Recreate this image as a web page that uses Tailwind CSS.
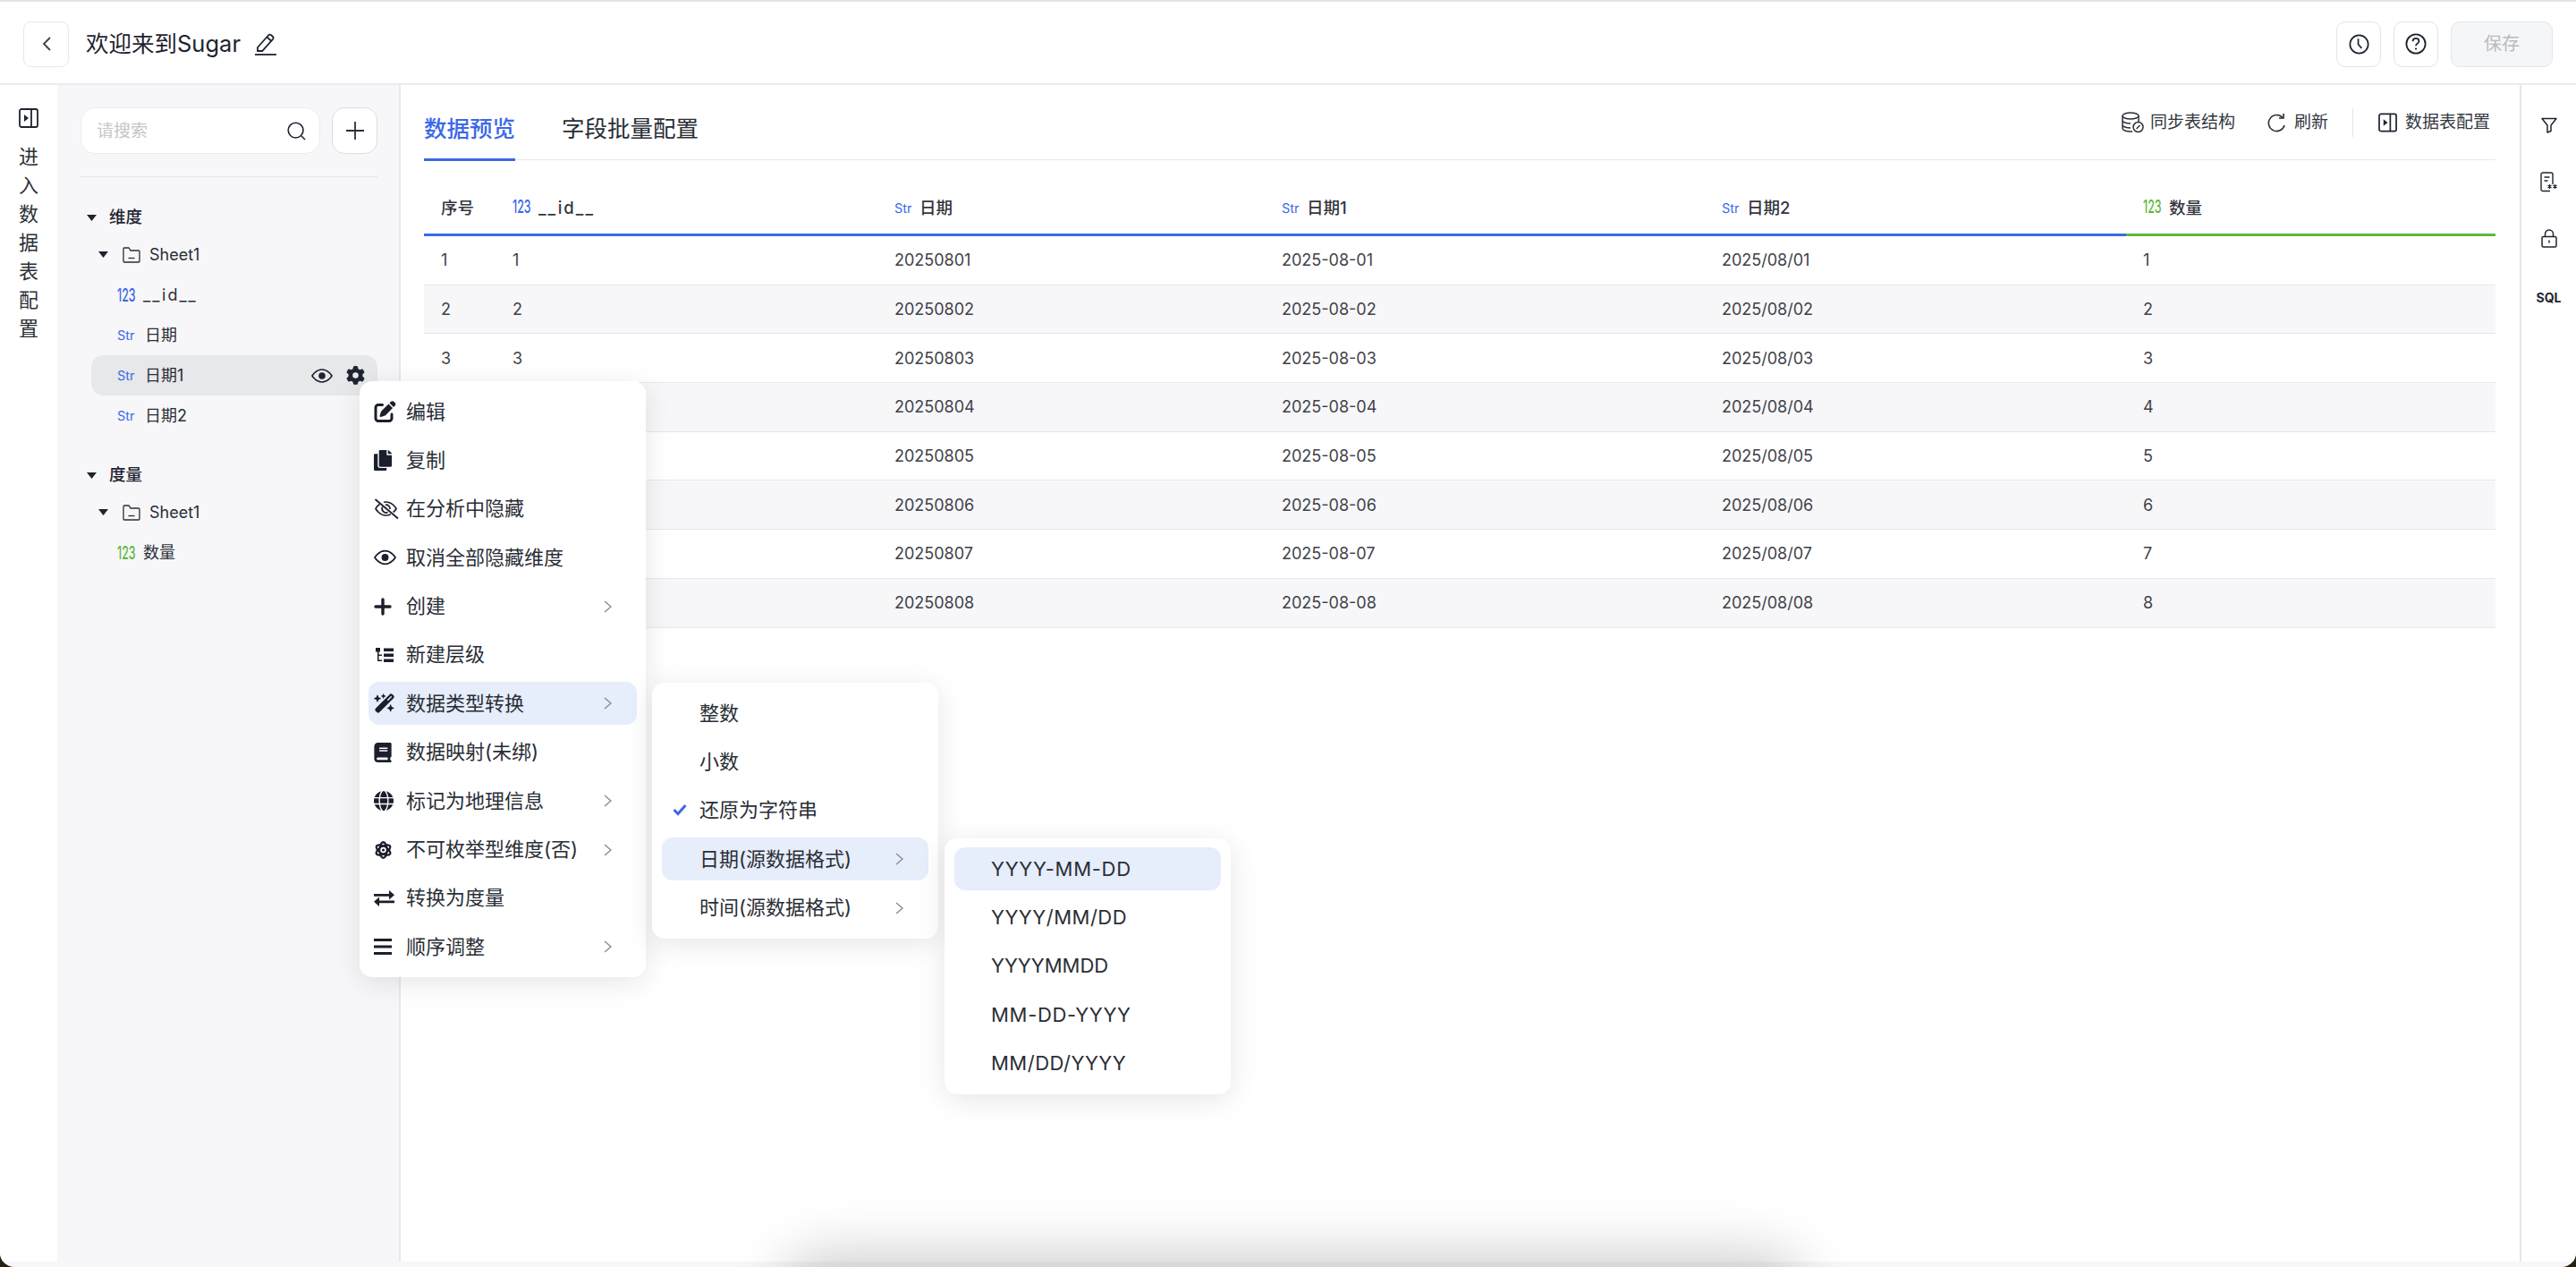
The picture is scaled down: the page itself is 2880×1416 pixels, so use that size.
<!DOCTYPE html>
<html lang="zh-CN">
<head>
<meta charset="utf-8">
<title>Sugar</title>
<script src="https://cdn.jsdelivr.net/npm/@tailwindcss/browser@4"></script>
</head>
<body class="m-0">
<div class="relative w-[2880px] h-[1416px] overflow-hidden bg-[#2b1d12] font-['Inter','Noto_Sans_CJK_SC',sans-serif] text-[#1f2430]">
  <div class="h-full rounded-b-[16px] overflow-hidden bg-[#f7f7f9] flex flex-col pb-[6px]">
    <!-- header -->
    <header class="h-[95px] shrink-0 bg-white border-t-2 border-t-[#e3e3e3] border-b-2 border-b-[#ececec] flex items-center pl-[26px] pr-[26px] pt-[3px]">
      <button class="w-[51px] h-[51px] rounded-[8px] border border-[#e8e8e8] flex items-center justify-center">
        <svg class="w-[12px] h-[18px]" viewBox="0 0 12 18" fill="none" stroke="#3c4048" stroke-width="1.8"><path d="M10 2 3 9l7 7"/></svg>
      </button>
      <h1 class="ml-[19px] text-[25.5px] font-normal leading-none">欢迎来到Sugar</h1>
      <svg class="ml-[16px] w-[24px] h-[26px]" viewBox="0 0 24 26" fill="none" stroke="#1f2430" stroke-width="1.8"><path d="M3 17 15 3.5c1-1 2.2-1 3.2-.2l1.6 1.4c1 .9 1 2.2.2 3.2L8.2 21H3z"/><path d="m13.5 5.5 5 4.5"/><path d="M0 25h24"/></svg>
      <div class="ml-auto flex items-center gap-[14px]">
        <button class="w-[50px] h-[51px] rounded-[10px] border border-[#e4e4e4] flex items-center justify-center">
          <svg class="w-[23px] h-[23px]" viewBox="0 0 24 24" fill="none" stroke="#1f2430" stroke-width="1.8"><circle cx="12" cy="12" r="10.6"/><path d="M11 5.5V12l4 4.5"/></svg>
        </button>
        <button class="w-[50px] h-[51px] rounded-[10px] border border-[#e4e4e4] flex items-center justify-center">
          <svg class="w-[24px] h-[24px]" viewBox="0 0 24 24" fill="none" stroke="#1f2430" stroke-width="1.8"><circle cx="12" cy="12" r="10.6"/><path d="M8.6 9.3c0-2 1.5-3.4 3.4-3.4s3.4 1.3 3.4 3.1c0 2.6-3.4 2.7-3.4 5.2"/><circle cx="12" cy="17.6" r="1.1" fill="#1f2430" stroke="none"/></svg>
        </button>
        <button class="w-[114px] h-[51px] rounded-[10px] border border-[#e4e6ea] bg-[#f5f6f8] text-[#b9bbbf] text-[20px]">保存</button>
      </div>
    </header>
    <div class="flex-1 flex min-h-0">
      <!-- narrow rail -->
      <aside class="w-[64px] shrink-0 bg-white pt-[26px] flex flex-col items-center">
        <svg class="w-[22px] h-[22px]" viewBox="0 0 22 22" fill="none" stroke="#1f2430" stroke-width="1.8"><rect x="1" y="1" width="20" height="20" rx="2"/><path d="M14 1v20"/><path d="M6 7l5 4-5 4z" fill="#1f2430" stroke="none"/></svg>
        <div class="mt-[16px] flex flex-col items-center text-[22px] leading-[32px] text-[#2c3038]">
          <span>进</span><span>入</span><span>数</span><span>据</span><span>表</span><span>配</span><span>置</span>
        </div>
      </aside>
      <!-- field panel -->
      <aside class="w-[384px] shrink-0 bg-[#f7f7f9] border-r-2 border-r-[#e7e8ea] pl-[26px] pr-[24px] pt-[25px]">
        <div class="flex gap-[13px]">
          <div class="w-[268px] h-[52px] rounded-[16px] bg-white border border-[#ececee] flex items-center pl-[17px] pr-[15px] justify-between">
            <span class="text-[#c4c6ca] text-[19px] pt-[2px]">请搜索</span>
            <svg class="w-[21px] h-[21px]" viewBox="0 0 21 21" fill="none" stroke="#1f2430" stroke-width="1.6"><circle cx="9.6" cy="9.6" r="8.4"/><path d="m16 16 4 4"/></svg>
          </div>
          <button class="w-[51px] h-[52px] rounded-[14px] bg-white border border-[#dcdde0] flex items-center justify-center">
            <svg class="w-[22px] h-[22px]" viewBox="0 0 22 22" stroke="#2a2e36" stroke-width="1.8"><path d="M11 1v20M1 11h20"/></svg>
          </button>
        </div>
        <div class="mt-[25px] h-px bg-[#e3e4e7]"></div>
        <div class="mt-[24px]">
          <div class="h-[42px] flex items-center pl-[7px] gap-[14px]">
            <svg class="w-[11px] h-[7px]" viewBox="0 0 11 7" fill="#1f2430"><path d="M0 0h11L5.5 7z"/></svg>
            <span class="text-[18.5px] font-medium">维度</span>
          </div>
          <div class="h-[41px] flex items-center pl-[20px]">
            <svg class="w-[11px] h-[7px]" viewBox="0 0 11 7" fill="#1f2430"><path d="M0 0h11L5.5 7z"/></svg>
            <svg class="ml-[16px] w-[20px] h-[18px]" viewBox="0 0 20 18" fill="none" stroke="#2a2e36" stroke-width="1.3"><path d="M1 16V2c0-.6.4-1 1-1h5l2 3h9c.6 0 1 .4 1 1v11c0 .6-.4 1-1 1H2c-.6 0-1-.4-1-1z"/><path d="M6.5 12.5h7"/></svg>
            <span class="ml-[10px] text-[18px] text-[#2a2e36]">Sheet1</span>
          </div>
          <div class="mt-[2px] h-[45px] flex items-center pl-[41px] text-[18px] text-[#2a2e36]">
            <span class="inline-block w-[29px] text-[#3b68e8]"><span class="inline-block origin-left scale-x-[.62] text-[20px] font-medium">123</span></span>
            <span class="tracking-[2px]">__id__</span>
          </div>
          <div class="h-[45px] flex items-center pl-[41px] text-[18px] text-[#2a2e36]">
            <span class="w-[31px] text-[14.5px] text-[#3b68e8]">Str</span><span>日期</span>
          </div>
          <div class="h-[45px] ml-[12px] rounded-[14px] bg-[#e7e8ea] flex items-center pl-[29px] pr-[14px] text-[18px] text-[#2a2e36]">
            <span class="w-[31px] text-[14.5px] text-[#3b68e8]">Str</span><span>日期1</span>
            <svg class="ml-auto w-[24px] h-[16px]" viewBox="0 0 24 16" fill="none" stroke="#1f2430" stroke-width="1.7"><path d="M1 8s4-7 11-7 11 7 11 7-4 7-11 7S1 8 1 8z"/><circle cx="12" cy="8" r="3.8" fill="#1f2430" stroke="none"/></svg>
            <svg class="ml-[15px] w-[21px] h-[21px]" viewBox="0 0 512 512" fill="#1f2430"><path d="M495.9 166.6c3.2 8.7 .5 18.4-6.4 24.6l-43.3 39.4c1.1 8.3 1.7 16.8 1.7 25.4s-.6 17.1-1.7 25.4l43.3 39.4c6.9 6.2 9.6 15.9 6.4 24.6c-4.4 11.9-9.7 23.3-15.8 34.3l-4.7 8.1c-6.6 11-14 21.4-22.1 31.2c-5.9 7.2-15.7 9.6-24.5 6.8l-55.7-17.7c-13.4 10.3-28.2 18.9-44 25.4l-12.5 57.1c-2 9.1-9 16.3-18.2 17.8c-13.8 2.3-28 3.5-42.5 3.5s-28.7-1.2-42.5-3.5c-9.2-1.5-16.2-8.7-18.2-17.8l-12.5-57.1c-15.8-6.5-30.6-15.1-44-25.4L83.1 425.9c-8.8 2.8-18.6 .3-24.5-6.8c-8.1-9.8-15.5-20.2-22.1-31.2l-4.7-8.1c-6.1-11-11.4-22.4-15.8-34.3c-3.2-8.7-.5-18.4 6.4-24.6l43.3-39.4C64.6 273.1 64 264.6 64 256s.6-17.1 1.7-25.4L22.4 191.2c-6.9-6.2-9.6-15.9-6.4-24.6c4.4-11.9 9.7-23.3 15.8-34.3l4.7-8.1c6.6-11 14-21.4 22.1-31.2c5.9-7.2 15.7-9.6 24.5-6.8l55.7 17.7c13.4-10.3 28.2-18.9 44-25.4l12.5-57.1c2-9.1 9-16.3 18.2-17.8C227.3 1.2 241.5 0 256 0s28.7 1.2 42.5 3.5c9.2 1.5 16.2 8.7 18.2 17.8l12.5 57.1c15.8 6.5 30.6 15.1 44 25.4l55.7-17.7c8.8-2.8 18.6-.3 24.5 6.8c8.1 9.8 15.5 20.2 22.1 31.2l4.7 8.1c6.1 11 11.4 22.4 15.8 34.3zM256 336a80 80 0 1 0 0-160 80 80 0 1 0 0 160z"/></svg>
          </div>
          <div class="h-[45px] flex items-center pl-[41px] text-[18px] text-[#2a2e36]">
            <span class="w-[31px] text-[14.5px] text-[#3b68e8]">Str</span><span>日期2</span>
          </div>
          <div class="mt-[23px] h-[42px] flex items-center pl-[7px] gap-[14px]">
            <svg class="w-[11px] h-[7px]" viewBox="0 0 11 7" fill="#1f2430"><path d="M0 0h11L5.5 7z"/></svg>
            <span class="text-[18.5px] font-medium">度量</span>
          </div>
          <div class="h-[41px] flex items-center pl-[20px]">
            <svg class="w-[11px] h-[7px]" viewBox="0 0 11 7" fill="#1f2430"><path d="M0 0h11L5.5 7z"/></svg>
            <svg class="ml-[16px] w-[20px] h-[18px]" viewBox="0 0 20 18" fill="none" stroke="#2a2e36" stroke-width="1.3"><path d="M1 16V2c0-.6.4-1 1-1h5l2 3h9c.6 0 1 .4 1 1v11c0 .6-.4 1-1 1H2c-.6 0-1-.4-1-1z"/><path d="M6.5 12.5h7"/></svg>
            <span class="ml-[10px] text-[18px] text-[#2a2e36]">Sheet1</span>
          </div>
          <div class="mt-[2px] h-[45px] flex items-center pl-[41px] text-[18px] text-[#2a2e36]">
            <span class="inline-block w-[29px] text-[#5fb83c]"><span class="inline-block origin-left scale-x-[.62] text-[20px] font-medium">123</span></span>
            <span>数量</span>
          </div>
        </div>
      </aside>
      <!-- main -->
      <main class="flex-1 min-w-0 bg-white pl-[26px] pr-[27px]">
        <div class="h-[84px] border-b-[1.5px] border-b-[#e8e8ea] flex items-end relative">
          <div class="h-[84px] w-[102px] flex items-center justify-center border-b-[3px] border-b-[#3b68e8] -mb-[1.5px] pt-[16px] text-[25.5px] font-medium text-[#3b68e8] whitespace-nowrap">数据预览</div>
          <div class="h-[84px] ml-[52px] flex items-center pt-[16px] text-[25.5px] text-[#2a2e36] whitespace-nowrap">字段批量配置</div>
          <div class="ml-auto self-start mt-[26px] h-[32px] flex items-center text-[19px] text-[#33373f] pr-[6px]">
            <svg class="w-[25px] h-[24px]" viewBox="0 0 25 24" fill="none" stroke="#2a2e36" stroke-width="1.5"><ellipse cx="10" cy="4.5" rx="9" ry="3.5"/><path d="M1 4.5v14c0 2 4 3.5 9 3.5h2M19 4.5V11M1 9.5c0 2 4 3.5 9 3.5M1 14.5c0 2 4 3.5 9 3.5"/><circle cx="18.5" cy="17" r="5.5" fill="#fff"/><path d="m16.5 19 4-4"/></svg>
            <span class="ml-[7px] whitespace-nowrap">同步表结构</span>
            <svg class="ml-[36px] w-[20px] h-[22px]" viewBox="0 0 20 22" fill="none" stroke="#2a2e36" stroke-width="1.6"><path d="M17 5.5A9 9 0 1 0 19 14"/><path d="M18 1v5h-5"/></svg>
            <span class="ml-[10px] whitespace-nowrap">刷新</span>
            <span class="ml-[27px] w-px h-[32px] bg-[#e3e4e7]"></span>
            <svg class="ml-[28px] w-[21px] h-[22px]" viewBox="0 0 22 22" fill="none" stroke="#1f2430" stroke-width="1.8"><rect x="1" y="1" width="20" height="20" rx="2"/><path d="M14 1v20"/><path d="M6 7l5 4-5 4z" fill="#1f2430" stroke="none"/></svg>
            <span class="ml-[9px] whitespace-nowrap">数据表配置</span>
          </div>
        </div>
        <!-- table -->
        <div class="text-[18px] text-[#3f4249]">
          <div class="grid grid-cols-[80px_427px_433px_492px_471px_413px] h-[85px] items-center pt-[28px] font-medium text-[#33363d]">
            <div class="pl-[19px] pb-[3px] h-[57px] flex items-center border-b-[3px] border-b-[#3b68e8] text-[18.5px]">序号</div>
            <div class="pl-[19px] pb-[3px] h-[57px] flex items-center border-b-[3px] border-b-[#3b68e8] text-[18.5px]"><span class="inline-block w-[29px] text-[#3b68e8]"><span class="inline-block origin-left scale-x-[.62] text-[20px] -translate-y-[2px]">123</span></span><span class="tracking-[2px]">__id__</span></div>
            <div class="pl-[19px] pb-[3px] h-[57px] flex items-center border-b-[3px] border-b-[#3b68e8] text-[18.5px]"><span class="w-[28px] text-[14.5px] font-normal text-[#3b68e8]">Str</span><span>日期</span></div>
            <div class="pl-[19px] pb-[3px] h-[57px] flex items-center border-b-[3px] border-b-[#3b68e8] text-[18.5px]"><span class="w-[28px] text-[14.5px] font-normal text-[#3b68e8]">Str</span><span>日期1</span></div>
            <div class="pl-[19px] pb-[3px] h-[57px] flex items-center border-b-[3px] border-b-[#3b68e8] text-[18.5px]"><span class="w-[28px] text-[14.5px] font-normal text-[#3b68e8]">Str</span><span>日期2</span></div>
            <div class="pl-[19px] pb-[3px] h-[57px] flex items-center border-b-[3px] border-b-[#5fb83c] text-[18.5px]"><span class="inline-block w-[29px] text-[#5fb83c]"><span class="inline-block origin-left scale-x-[.62] text-[20px] -translate-y-[2px]">123</span></span><span>数量</span></div>
          </div>
          <div class="grid grid-cols-[80px_427px_433px_492px_471px_413px] h-[54.7px] items-center border-b-[1.5px] border-b-[#e8e8ea] bg-white"><div class="pl-[19px]">1</div><div class="pl-[19px]">1</div><div class="pl-[19px]">20250801</div><div class="pl-[19px]">2025-08-01</div><div class="pl-[19px]">2025/08/01</div><div class="pl-[19px]">1</div></div>
          <div class="grid grid-cols-[80px_427px_433px_492px_471px_413px] h-[54.7px] items-center border-b-[1.5px] border-b-[#e8e8ea] bg-[#f7f7f9]"><div class="pl-[19px]">2</div><div class="pl-[19px]">2</div><div class="pl-[19px]">20250802</div><div class="pl-[19px]">2025-08-02</div><div class="pl-[19px]">2025/08/02</div><div class="pl-[19px]">2</div></div>
          <div class="grid grid-cols-[80px_427px_433px_492px_471px_413px] h-[54.7px] items-center border-b-[1.5px] border-b-[#e8e8ea] bg-white"><div class="pl-[19px]">3</div><div class="pl-[19px]">3</div><div class="pl-[19px]">20250803</div><div class="pl-[19px]">2025-08-03</div><div class="pl-[19px]">2025/08/03</div><div class="pl-[19px]">3</div></div>
          <div class="grid grid-cols-[80px_427px_433px_492px_471px_413px] h-[54.7px] items-center border-b-[1.5px] border-b-[#e8e8ea] bg-[#f7f7f9]"><div class="pl-[19px]">4</div><div class="pl-[19px]">4</div><div class="pl-[19px]">20250804</div><div class="pl-[19px]">2025-08-04</div><div class="pl-[19px]">2025/08/04</div><div class="pl-[19px]">4</div></div>
          <div class="grid grid-cols-[80px_427px_433px_492px_471px_413px] h-[54.7px] items-center border-b-[1.5px] border-b-[#e8e8ea] bg-white"><div class="pl-[19px]">5</div><div class="pl-[19px]">5</div><div class="pl-[19px]">20250805</div><div class="pl-[19px]">2025-08-05</div><div class="pl-[19px]">2025/08/05</div><div class="pl-[19px]">5</div></div>
          <div class="grid grid-cols-[80px_427px_433px_492px_471px_413px] h-[54.7px] items-center border-b-[1.5px] border-b-[#e8e8ea] bg-[#f7f7f9]"><div class="pl-[19px]">6</div><div class="pl-[19px]">6</div><div class="pl-[19px]">20250806</div><div class="pl-[19px]">2025-08-06</div><div class="pl-[19px]">2025/08/06</div><div class="pl-[19px]">6</div></div>
          <div class="grid grid-cols-[80px_427px_433px_492px_471px_413px] h-[54.7px] items-center border-b-[1.5px] border-b-[#e8e8ea] bg-white"><div class="pl-[19px]">7</div><div class="pl-[19px]">7</div><div class="pl-[19px]">20250807</div><div class="pl-[19px]">2025-08-07</div><div class="pl-[19px]">2025/08/07</div><div class="pl-[19px]">7</div></div>
          <div class="grid grid-cols-[80px_427px_433px_492px_471px_413px] h-[54.7px] items-center border-b-[1.5px] border-b-[#e8e8ea] bg-[#f7f7f9]"><div class="pl-[19px]">8</div><div class="pl-[19px]">8</div><div class="pl-[19px]">20250808</div><div class="pl-[19px]">2025-08-08</div><div class="pl-[19px]">2025/08/08</div><div class="pl-[19px]">8</div></div>
        </div>
      </main>
      <!-- right rail -->
      <aside class="w-[63px] shrink-0 bg-white border-l-2 border-l-[#e6e6e6] flex flex-col items-center pt-[36px]">
        <svg class="w-[18px] h-[18px]" viewBox="0 0 18 18" fill="none" stroke="#1f2430" stroke-width="1.5" stroke-linejoin="round"><path d="M1 1.5h16L11 9v6.5L7 17V9z"/></svg>
        <svg class="mt-[43px] w-[20px] h-[23px]" viewBox="0 0 20 23" fill="none" stroke="#1f2430" stroke-width="1.4"><path d="M11 21.5H3c-1 0-2-.8-2-2V3c0-1 .8-2 2-2h9c1 0 2 .8 2 2v11"/><path d="M4.5 6h6M4.5 10h4"/><path d="M10.5 14v5M8.5 15l4 3M12.5 15l-4 3M16.5 14v5M14.5 15l4 3M18.5 15l-4 3" stroke-width="1.1"/></svg>
        <svg class="mt-[41px] w-[18px] h-[21px]" viewBox="0 0 18 21" fill="none" stroke="#1f2430" stroke-width="1.5"><rect x="1" y="8.5" width="16" height="11.5" rx="1.5"/><path d="M4.5 8.5V5.5a4.5 4.5 0 0 1 9 0v3"/><path d="M9 12.5v3"/></svg>
        <span class="mt-[49px] text-[14px] font-bold leading-none text-[#1f2430]">SQL</span>
      </aside>
    </div>
  </div>

  <!-- soft shadow rising from below the window -->
  <div class="absolute left-[905px] top-[1432px] w-[1080px] h-[40px] rounded-[20px] shadow-[0_0_60px_34px_rgba(0,0,0,0.18)]"></div>

  <!-- context menu -->
  <div class="absolute left-[402px] top-[426px] w-[320px] rounded-[14px] bg-white shadow-[0_6px_32px_rgba(0,0,0,0.1)] py-[10px] flex flex-col gap-[6.4px] text-[22px] text-[#2a2e36]">
    <div class="h-[48px] mx-[10px] pl-[6px] pr-[28px] flex items-center"><span class="w-[36px]"><svg class="w-[25px] h-[24px]" viewBox="0 0 512 512" fill="#1a1f2b"><path d="M471.6 21.7c-21.9-21.9-57.3-21.9-79.2 0L362.3 51.7l97.9 97.9 30.1-30.1c21.9-21.9 21.9-57.3 0-79.2L471.6 21.7zm-299.2 220c-6.1 6.1-10.8 13.6-13.5 21.9l-29.6 88.8c-2.9 8.6-.6 18.1 5.8 24.6s15.9 8.7 24.6 5.8l88.8-29.6c8.2-2.7 15.7-7.4 21.9-13.5L437.7 172.3 339.7 74.3 172.4 241.7zM96 64C43 64 0 107 0 160V416c0 53 43 96 96 96H352c53 0 96-43 96-96V320c0-17.7-14.3-32-32-32s-32 14.3-32 32v96c0 17.7-14.3 32-32 32H96c-17.7 0-32-14.3-32-32V160c0-17.7 14.3-32 32-32h96c17.7 0 32-14.3 32-32s-14.3-32-32-32H96z"/></svg></span><span>编辑</span></div>
    <div class="h-[48px] mx-[10px] pl-[6px] pr-[28px] flex items-center"><span class="w-[36px]"><svg class="w-[20px] h-[23px]" viewBox="0 0 448 512" fill="#1a1f2b"><path d="M320 448v40c0 13.255-10.745 24-24 24H24c-13.255 0-24-10.745-24-24V120c0-13.255 10.745-24 24-24h72v296c0 30.879 25.121 56 56 56h168zm0-344V0H152c-13.255 0-24 10.745-24 24v368c0 13.255 10.745 24 24 24h272c13.255 0 24-10.745 24-24V128H344c-13.2 0-24-10.8-24-24zm120.971-31.029L375.029 7.029A24 24 0 0 0 358.059 0H352v96h96v-6.059a24 24 0 0 0-7.029-16.97z"/></svg></span><span>复制</span></div>
    <div class="h-[48px] mx-[10px] pl-[6px] pr-[28px] flex items-center"><span class="w-[36px]"><svg class="w-[28px] h-[24px]" viewBox="0 0 28 24" fill="none" stroke="#1a1f2b" stroke-width="1.7"><path d="M6.5 6.5C3.5 8.3 2 11.5 2 11.5s4 7.5 11.5 7.5c2 0 3.8-.5 5.3-1.3M11 4.3c.8-.2 1.6-.3 2.5-.3C21 4 25 11.5 25 11.5s-1.1 2.1-3.3 4"/><path d="M9.6 9.5a4.5 4.5 0 0 0 6 6"/><path d="M13 7.2a4.5 4.5 0 0 1 5 4.8"/><path d="M1.5 1 27 22.5" stroke-width="1.8"/></svg></span><span>在分析中隐藏</span></div>
    <div class="h-[48px] mx-[10px] pl-[6px] pr-[28px] flex items-center"><span class="w-[36px]"><svg class="w-[25px] h-[18px]" viewBox="0 0 24 16" fill="none" stroke="#1a1f2b" stroke-width="1.7"><path d="M1 8s4-7 11-7 11 7 11 7-4 7-11 7S1 8 1 8z"/><circle cx="12" cy="8" r="3.8" fill="#1a1f2b" stroke="none"/></svg></span><span>取消全部隐藏维度</span></div>
    <div class="h-[48px] mx-[10px] pl-[6px] pr-[28px] flex items-center"><span class="w-[36px]"><svg class="w-[20px] h-[20px]" viewBox="0 0 20 20" stroke="#1a1f2b" stroke-width="3.4" stroke-linecap="round"><path d="M10 2v16M2 10h16"/></svg></span><span>创建</span><svg class="ml-auto w-[9px] h-[14px]" viewBox="0 0 9 14" fill="none" stroke="#85888e" stroke-width="1.3"><path d="m1 1 7 6-7 6"/></svg></div>
    <div class="h-[48px] mx-[10px] pl-[6px] pr-[28px] flex items-center"><span class="w-[36px]"><svg class="w-[24px] h-[22px]" viewBox="0 0 24 22" fill="#1a1f2b"><rect x="2" y="3" width="5" height="4.5"/><rect x="4" y="7" width="1.5" height="11"/><rect x="4" y="10.5" width="5" height="1.5"/><rect x="4" y="16.5" width="5" height="1.5"/><rect x="11" y="3.5" width="11" height="3.5"/><rect x="11" y="9.5" width="11" height="3.5"/><rect x="11" y="15.5" width="11" height="3.5"/></svg></span><span>新建层级</span></div>
    <div class="h-[48px] mx-[10px] pl-[6px] pr-[28px] flex items-center rounded-[12px] bg-[#e6edfb]"><span class="w-[36px]"><svg class="w-[24px] h-[22px]" viewBox="0 0 576 512" fill="#1a1f2b"><path d="M234.7 42.7L197 56.8c-3 1.1-5 4-5 7.2s2 6.1 5 7.2l37.7 14.1L248.8 123c1.1 3 4 5 7.2 5s6.1-2 7.2-5l14.1-37.7L315 71.2c3-1.1 5-4 5-7.2s-2-6.1-5-7.2L277.3 42.7 263.2 5c-1.1-3-4-5-7.2-5s-6.1 2-7.2 5L234.7 42.7zM46.1 395.4c-18.7 18.7-18.7 49.1 0 67.9l34.6 34.6c18.7 18.7 49.1 18.7 67.9 0L529.9 116.5c18.7-18.7 18.7-49.1 0-67.9L495.3 14.1c-18.7-18.7-49.1-18.7-67.9 0L46.1 395.4zM484.6 82.6l-105 105-23.3-23.3 105-105 23.3 23.3zM7.5 117.2C3 118.9 0 123.2 0 128s3 9.1 7.5 10.8L64 160l21.2 56.5c1.7 4.5 6 7.5 10.8 7.5s9.1-3 10.8-7.5L128 160l56.5-21.2c4.5-1.7 7.5-6 7.5-10.8s-3-9.1-7.5-10.8L128 96 106.8 39.5C105.1 35 100.8 32 96 32s-9.1 3-10.8 7.5L64 96 7.5 117.2zm352 256c-4.5 1.7-7.5 6-7.5 10.8s3 9.1 7.5 10.8L416 416l21.2 56.5c1.7 4.5 6 7.5 10.8 7.5s9.1-3 10.8-7.5L480 416l56.5-21.2c4.5-1.7 7.5-6 7.5-10.8s-3-9.1-7.5-10.8L480 352l-21.2-56.5c-1.7-4.5-6-7.5-10.8-7.5s-9.1 3-10.8 7.5L416 352l-56.5 21.2z"/></svg></span><span>数据类型转换</span><svg class="ml-auto w-[9px] h-[14px]" viewBox="0 0 9 14" fill="none" stroke="#85888e" stroke-width="1.3"><path d="m1 1 7 6-7 6"/></svg></div>
    <div class="h-[48px] mx-[10px] pl-[6px] pr-[28px] flex items-center"><span class="w-[36px]"><svg class="w-[20px] h-[22px]" viewBox="0 0 448 512" fill="#1a1f2b"><path d="M96 0C43 0 0 43 0 96V416c0 53 43 96 96 96H384h32c17.7 0 32-14.3 32-32s-14.3-32-32-32V384c17.7 0 32-14.3 32-32V32c0-17.7-14.3-32-32-32H384 96zm0 384H352v64H96c-17.7 0-32-14.3-32-32s14.3-32 32-32zm32-240c0-8.8 7.2-16 16-16H336c8.8 0 16 7.2 16 16s-7.2 16-16 16H144c-8.8 0-16-7.2-16-16zm16 48H336c8.8 0 16 7.2 16 16s-7.2 16-16 16H144c-8.8 0-16-7.2-16-16s7.2-16 16-16z"/></svg></span><span>数据映射(未绑)</span></div>
    <div class="h-[48px] mx-[10px] pl-[6px] pr-[28px] flex items-center"><span class="w-[36px]"><svg class="w-[22px] h-[22px]" viewBox="0 0 512 512" fill="#1a1f2b"><path d="M352 256c0 22.2-1.2 43.6-3.3 64H163.3c-2.2-20.4-3.3-41.8-3.3-64s1.2-43.6 3.3-64H348.7c2.2 20.4 3.3 41.8 3.3 64zm28.8-64H503.9c5.3 20.5 8.1 41.9 8.1 64s-2.8 43.5-8.1 64H380.8c2.1-20.6 3.2-42 3.2-64s-1.1-43.4-3.2-64zm112.6-32H376.7c-10-63.9-29.8-117.4-55.3-151.6c78.3 20.7 142 77.5 172.1 151.6zm-149.1 0H167.7c6.1-36.4 15.5-68.6 27-94.7c10.5-23.6 22.2-40.7 33.5-51.5C239.4 3.2 248.7 0 256 0s16.6 3.2 27.8 13.8c11.3 10.8 23 27.9 33.5 51.5c11.6 26 20.9 58.2 27 94.7zm-209 0H18.6C48.6 85.9 112.2 29.1 190.6 8.4C165.1 42.6 145.3 96.1 135.3 160zM8.1 192H131.2c-2.1 20.6-3.2 42-3.2 64s1.1 43.4 3.2 64H8.1C2.8 299.5 0 278.1 0 256s2.8-43.5 8.1-64zM194.7 446.6c-11.6-26-20.9-58.2-27-94.6H344.3c-6.1 36.4-15.5 68.6-27 94.6c-10.5 23.6-22.2 40.7-33.5 51.5C272.6 508.8 263.3 512 256 512s-16.6-3.2-27.8-13.8c-11.3-10.8-23-27.9-33.5-51.5zM135.3 352c10 63.9 29.8 117.4 55.3 151.6C112.2 482.9 48.6 426.1 18.6 352H135.3zm358.1 0c-30 74.1-93.6 130.9-171.9 151.6c25.5-34.2 45.2-87.7 55.3-151.6H493.4z"/></svg></span><span>标记为地理信息</span><svg class="ml-auto w-[9px] h-[14px]" viewBox="0 0 9 14" fill="none" stroke="#85888e" stroke-width="1.3"><path d="m1 1 7 6-7 6"/></svg></div>
    <div class="h-[48px] mx-[10px] pl-[6px] pr-[28px] flex items-center"><span class="w-[36px]"><svg class="w-[21px] h-[24px]" viewBox="0 0 24 24" fill="none" stroke="#1a1f2b" stroke-width="2.6"><ellipse cx="12" cy="12" rx="10" ry="4.6" transform="rotate(30 12 12)"/><ellipse cx="12" cy="12" rx="10" ry="4.6" transform="rotate(90 12 12)"/><ellipse cx="12" cy="12" rx="10" ry="4.6" transform="rotate(150 12 12)"/><circle cx="12" cy="12" r="3.6" fill="#fff" stroke="none"/><circle cx="12" cy="12" r="1.8" fill="#1a1f2b" stroke="none"/></svg></span><span>不可枚举型维度(否)</span><svg class="ml-auto w-[9px] h-[14px]" viewBox="0 0 9 14" fill="none" stroke="#85888e" stroke-width="1.3"><path d="m1 1 7 6-7 6"/></svg></div>
    <div class="h-[48px] mx-[10px] pl-[6px] pr-[28px] flex items-center"><span class="w-[36px]"><svg class="w-[23px] h-[18px]" viewBox="0 0 23 18" fill="#1a1f2b"><path d="M0 4h17V0l6 5.3-6 5.2V6.7H0z"/><path d="M23 11.4H6V7.5L0 12.8 6 18v-3.800h17z"/></svg></span><span>转换为度量</span></div>
    <div class="h-[48px] mx-[10px] pl-[6px] pr-[28px] flex items-center"><span class="w-[36px]"><svg class="w-[20px] h-[18px]" viewBox="0 0 20 18" fill="#1a1f2b"><rect y="0" width="20" height="3"/><rect y="7.5" width="20" height="3"/><rect y="15" width="20" height="3"/></svg></span><span>顺序调整</span><svg class="ml-auto w-[9px] h-[14px]" viewBox="0 0 9 14" fill="none" stroke="#85888e" stroke-width="1.3"><path d="m1 1 7 6-7 6"/></svg></div>
  </div>

  <!-- submenu 1 -->
  <div class="absolute left-[729px] top-[763px] w-[320px] rounded-[14px] bg-white shadow-[0_6px_32px_rgba(0,0,0,0.1)] py-[10px] flex flex-col gap-[6.4px] text-[22px] text-[#2a2e36]">
    <div class="h-[48px] mx-[11px] pl-[42px] pr-[28px] flex items-center"><span>整数</span></div>
    <div class="h-[48px] mx-[11px] pl-[42px] pr-[28px] flex items-center"><span>小数</span></div>
    <div class="relative h-[48px] mx-[11px] pl-[42px] pr-[28px] flex items-center"><svg class="absolute left-[12px] top-[16px] w-[16px] h-[14px]" viewBox="0 0 16 14" fill="none" stroke="#3b68e8" stroke-width="3"><path d="m1.5 7 4.5 4.5L14.5 2"/></svg><span>还原为字符串</span></div>
    <div class="h-[48px] mx-[11px] pl-[42px] pr-[28px] flex items-center rounded-[12px] bg-[#e6edfb]"><span>日期(源数据格式)</span><svg class="ml-auto w-[9px] h-[14px]" viewBox="0 0 9 14" fill="none" stroke="#85888e" stroke-width="1.3"><path d="m1 1 7 6-7 6"/></svg></div>
    <div class="h-[48px] mx-[11px] pl-[42px] pr-[28px] flex items-center"><span>时间(源数据格式)</span><svg class="ml-auto w-[9px] h-[14px]" viewBox="0 0 9 14" fill="none" stroke="#85888e" stroke-width="1.3"><path d="m1 1 7 6-7 6"/></svg></div>
  </div>

  <!-- submenu 2 -->
  <div class="absolute left-[1056px] top-[937px] w-[320px] rounded-[14px] bg-white shadow-[0_6px_32px_rgba(0,0,0,0.1)] py-[10px] flex flex-col gap-[6.4px] text-[22px] text-[#2a2e36]">
    <div class="h-[48px] mx-[11px] pl-[41px] flex items-center rounded-[12px] bg-[#e6edfb] tracking-[.7px]">YYYY-MM-DD</div>
    <div class="h-[48px] mx-[11px] pl-[41px] flex items-center tracking-[.5px]">YYYY/MM/DD</div>
    <div class="h-[48px] mx-[11px] pl-[41px] flex items-center">YYYYMMDD</div>
    <div class="h-[48px] mx-[11px] pl-[41px] flex items-center tracking-[.7px]">MM-DD-YYYY</div>
    <div class="h-[48px] mx-[11px] pl-[41px] flex items-center tracking-[.5px]">MM/DD/YYYY</div>
  </div>
</div>
</body>
</html>
